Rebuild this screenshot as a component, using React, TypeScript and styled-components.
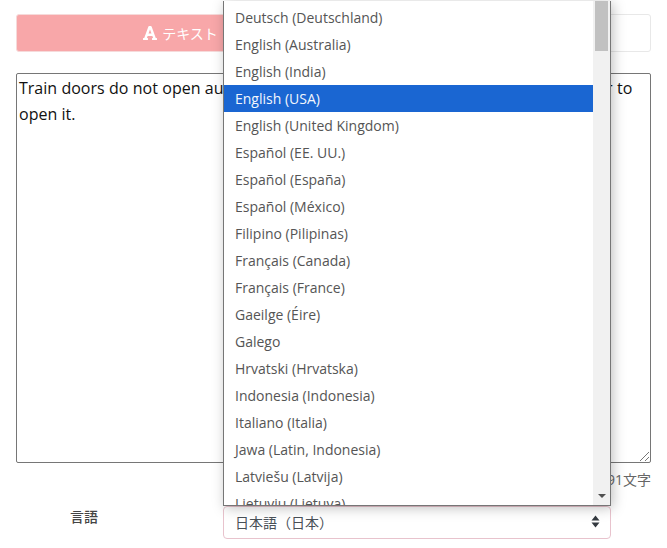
import React, { FC } from 'react';
import { createGlobalStyle, styled } from 'styled-components';
import { FaFont } from 'react-icons/fa';

const FONT = '"Open Sans", "Noto Sans CJK JP", sans-serif';

const LANGUAGES = [
  'Deutsch (Deutschland)',
  'English (Australia)',
  'English (India)',
  'English (USA)',
  'English (United Kingdom)',
  'Español (EE. UU.)',
  'Español (España)',
  'Español (México)',
  'Filipino (Pilipinas)',
  'Français (Canada)',
  'Français (France)',
  'Gaeilge (Éire)',
  'Galego',
  'Hrvatski (Hrvatska)',
  'Indonesia (Indonesia)',
  'Italiano (Italia)',
  'Jawa (Latin, Indonesia)',
  'Latviešu (Latvija)',
  'Lietuvių (Lietuva)',
];

const GlobalStyle = createGlobalStyle`
  html, body {
    margin: 0;
    height: 100%;
    overflow: hidden;
    background: #fff;
  }
  body {
    font-family: ${FONT};
    color: #212529;
  }
`;

const Page = styled.div`
  width: 667px;
  height: 548px;
  box-sizing: border-box;
  padding: 14px 16px 0;
  display: flex;
  flex-direction: column;
`;

const ModeTabs = styled.div`
  display: flex;
  height: 38px;
`;

const ModeTab = styled.div<{ $active?: boolean }>`
  flex: ${(p) => (p.$active ? '0 0 328px' : '1')};
  display: flex;
  align-items: center;
  justify-content: center;
  gap: 4px;
  box-sizing: border-box;
  font-size: 14px;
  border-radius: ${(p) => (p.$active ? '3px 0 0 3px' : '0 3px 3px 0')};
  background: ${(p) => (p.$active ? '#f8a7a9' : '#fff')};
  border: 1px solid ${(p) => (p.$active ? '#f6dada' : '#e8e8e8')};
  color: #fff;
`;

const TextBox = styled.div`
  margin-top: 21px;
  width: 635px;
  height: 390px;
  box-sizing: border-box;
  border: 1px solid #767676;
  border-radius: 2px;
  padding: 1px 2px;
  font-size: 16px;
  line-height: 26px;
  word-spacing: 0.2px;
  color: #111;
  position: relative;
`;

const ResizeGrip = styled.svg`
  position: absolute;
  right: 0;
  bottom: 0;
  width: 11px;
  height: 11px;
`;

const Counter = styled.div`
  margin-top: 7px;
  text-align: right;
  font-size: 14px;
  line-height: 20px;
  color: #666;
`;

const LanguageRow = styled.div`
  margin-top: 16px;
  display: grid;
  grid-template-columns: 136px 388px;
  column-gap: 71px;
  align-items: center;
`;

const LanguageLabel = styled.div`
  text-align: center;
  font-size: 14px;
  font-weight: 500;
  color: #444;
  margin-top: -14px;
`;

const SelectWrap = styled.div`
  position: relative;
`;

const SelectBox = styled.div`
  height: 33px;
  box-sizing: border-box;
  border: 1px solid #e8c3cd;
  border-radius: 4px;
  padding: 0 10px 2px 11px;
  display: flex;
  align-items: center;
  justify-content: space-between;
  font-size: 14px;
  color: #495057;
`;

const Dropdown = styled.div`
  position: absolute;
  left: 0;
  right: 0;
  bottom: 100%;
  height: 505px;
  box-sizing: border-box;
  display: flex;
  background: #fff;
  border: 1px solid #767676;
  border-top: 0;
  box-shadow: 2px 2px 12px rgba(0, 0, 0, 0.25);
  overflow: hidden;
`;

const OptionList = styled.div`
  flex: 1;
  padding-top: 3px;
  overflow: hidden;
`;

const Option = styled.div<{ $selected?: boolean }>`
  height: 27px;
  line-height: 27px;
  padding-left: 11px;
  font-size: 14px;
  white-space: nowrap;
  color: ${(p) => (p.$selected ? '#f2f6fd' : '#555')};
  background: ${(p) => (p.$selected ? '#1a66d2' : 'transparent')};
`;

const ScrollTrack = styled.div`
  width: 17px;
  background: #f1f1f1;
  position: relative;
`;

const ScrollThumb = styled.div`
  margin: 0 2px;
  height: 50px;
  background: #c1c1c1;
`;

const ScrollArrow = styled.div`
  position: absolute;
  left: 5px;
  bottom: 7px;
  width: 0;
  height: 0;
  border-left: 4px solid transparent;
  border-right: 4px solid transparent;
  border-top: 4px solid #505050;
`;

const SortArrows: FC = () => (
  <svg width="9" height="13" viewBox="0 0 9 13">
    <path d="M4.5 0.5 L8.5 5.5 L0.5 5.5 Z M0.5 7.5 L8.5 7.5 L4.5 12.5 Z" fill="#343a40" />
  </svg>
);

const App: FC = () => (
  <>
    <GlobalStyle />
    <Page>
      <ModeTabs>
        <ModeTab $active>
          <FaFont size={16} />
          <span>テキスト</span>
        </ModeTab>
        <ModeTab />
      </ModeTabs>
      <TextBox>
        Train doors do not open automatically. Please press the button beside the door to open it.
        <ResizeGrip viewBox="0 0 11 11">
          <path d="M1 10 L10 1 M6 10 L10 6" stroke="#777" strokeWidth="1" />
        </ResizeGrip>
      </TextBox>
      <Counter>91文字</Counter>
      <LanguageRow>
        <LanguageLabel>言語</LanguageLabel>
        <SelectWrap>
          <Dropdown>
            <OptionList>
              {LANGUAGES.map((name) => (
                <Option key={name} $selected={name === 'English (USA)'}>
                  {name}
                </Option>
              ))}
            </OptionList>
            <ScrollTrack>
              <ScrollThumb />
              <ScrollArrow />
            </ScrollTrack>
          </Dropdown>
          <SelectBox>
            <span>日本語（日本）</span>
            <SortArrows />
          </SelectBox>
        </SelectWrap>
      </LanguageRow>
    </Page>
  </>
);

export default App;
